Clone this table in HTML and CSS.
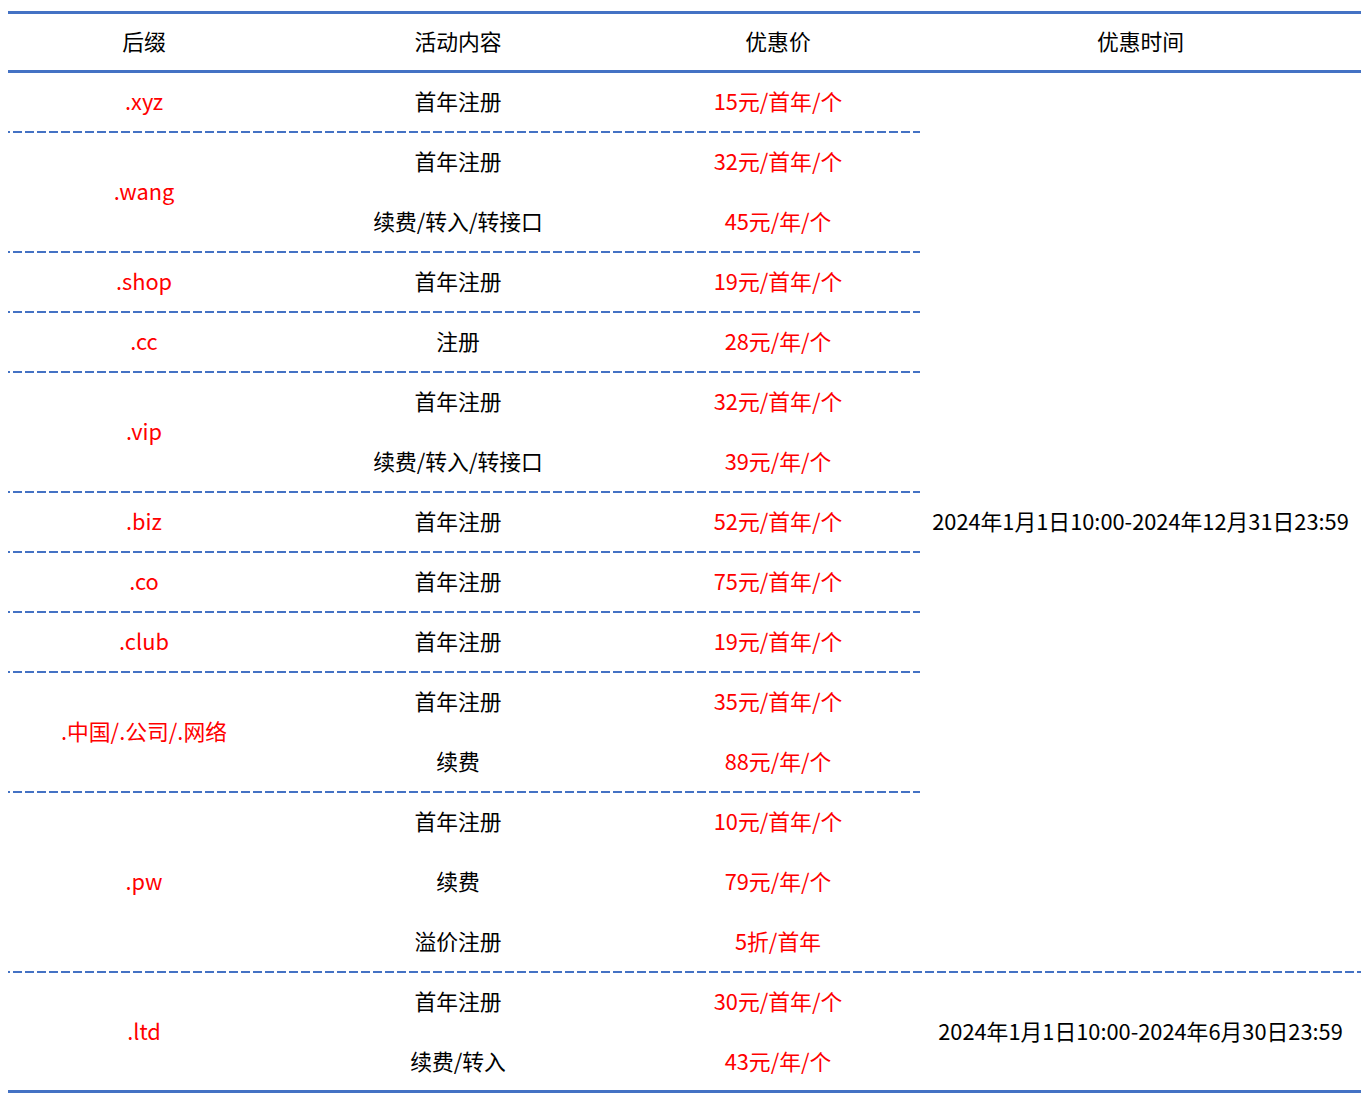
FILE: index.html
```html
<!DOCTYPE html>
<html lang="zh-CN">
<head>
<meta charset="utf-8">
<title>域名优惠活动</title>
<link rel="stylesheet" href="styles.css">
</head>
<body>
<div class="sheet">
  <div class="head">
    <div>后缀</div>
    <div>活动内容</div>
    <div>优惠价</div>
    <div>优惠时间</div>
  </div>

  <div class="section first">
    <div class="groups">
      <div class="group">
        <div class="suffix">.xyz</div>
        <div class="items">
          <div class="item"><span>首年注册</span><span class="price">15元/首年/个</span></div>
        </div>
      </div>
      <div class="group">
        <div class="suffix">.wang</div>
        <div class="items">
          <div class="item"><span>首年注册</span><span class="price">32元/首年/个</span></div>
          <div class="item"><span>续费/转入/转接口</span><span class="price">45元/年/个</span></div>
        </div>
      </div>
      <div class="group">
        <div class="suffix">.shop</div>
        <div class="items">
          <div class="item"><span>首年注册</span><span class="price">19元/首年/个</span></div>
        </div>
      </div>
      <div class="group">
        <div class="suffix">.cc</div>
        <div class="items">
          <div class="item"><span>注册</span><span class="price">28元/年/个</span></div>
        </div>
      </div>
      <div class="group">
        <div class="suffix">.vip</div>
        <div class="items">
          <div class="item"><span>首年注册</span><span class="price">32元/首年/个</span></div>
          <div class="item"><span>续费/转入/转接口</span><span class="price">39元/年/个</span></div>
        </div>
      </div>
      <div class="group">
        <div class="suffix">.biz</div>
        <div class="items">
          <div class="item"><span>首年注册</span><span class="price">52元/首年/个</span></div>
        </div>
      </div>
      <div class="group">
        <div class="suffix">.co</div>
        <div class="items">
          <div class="item"><span>首年注册</span><span class="price">75元/首年/个</span></div>
        </div>
      </div>
      <div class="group">
        <div class="suffix">.club</div>
        <div class="items">
          <div class="item"><span>首年注册</span><span class="price">19元/首年/个</span></div>
        </div>
      </div>
      <div class="group">
        <div class="suffix">.中国/.公司/.网络</div>
        <div class="items">
          <div class="item"><span>首年注册</span><span class="price">35元/首年/个</span></div>
          <div class="item"><span>续费</span><span class="price">88元/年/个</span></div>
        </div>
      </div>
      <div class="group">
        <div class="suffix">.pw</div>
        <div class="items">
          <div class="item"><span>首年注册</span><span class="price">10元/首年/个</span></div>
          <div class="item"><span>续费</span><span class="price">79元/年/个</span></div>
          <div class="item"><span>溢价注册</span><span class="price">5折/首年</span></div>
        </div>
      </div>
    </div>
    <div class="period">2024年1月1日10:00-2024年12月31日23:59</div>
  </div>

  <div class="section last">
    <div class="groups">
      <div class="group">
        <div class="suffix">.ltd</div>
        <div class="items">
          <div class="item"><span>首年注册</span><span class="price">30元/首年/个</span></div>
          <div class="item"><span>续费/转入</span><span class="price">43元/年/个</span></div>
        </div>
      </div>
    </div>
    <div class="period">2024年1月1日10:00-2024年6月30日23:59</div>
  </div>
</div>
</body>
</html>
```

FILE: styles.css
```css
html, body {
  margin: 0;
  padding: 0;
  background: #ffffff;
}

.sheet {
  width: 1353px;
  margin: 11px 8px 0;
  font-family: "Noto Sans CJK SC", "Noto Sans", sans-serif;
  font-size: 21.8px;
  color: #000000;
}

.head {
  display: grid;
  grid-template-columns: 272px 356px 284px 441px;
  height: 62px;
  box-sizing: border-box;
  padding-bottom: 4px;
  border-top: 3px solid #4472c4;
  border-bottom: 3px solid #4472c4;
  align-items: center;
  text-align: center;
}

.section {
  display: flex;
}

.section.first {
  background-image: repeating-linear-gradient(90deg, #4472c4 0 9px, transparent 9px 12px);
  background-size: 12px 2px;
  background-repeat: repeat-x;
  background-position: left -7px bottom 0;
}

.section.last {
  background-image: linear-gradient(#4472c4, #4472c4);
  background-size: 100% 3px;
  background-repeat: no-repeat;
  background-position: left bottom;
}

.groups {
  width: 912px;
  flex: none;
}

.group {
  display: flex;
  background-image: repeating-linear-gradient(90deg, #4472c4 0 9px, transparent 9px 12px);
  background-size: 12px 2px;
  background-repeat: repeat-x;
  background-position: left -7px bottom 0;
}

.section.first .group:last-child,
.section.last .group {
  background-image: none;
}

.suffix {
  width: 272px;
  flex: none;
  display: flex;
  align-items: center;
  justify-content: center;
  padding-bottom: 6px;
  box-sizing: border-box;
  color: #ff0000;
}

.items {
  width: 640px;
  flex: none;
}

.item {
  display: grid;
  grid-template-columns: 356px 284px;
  height: 60px;
  box-sizing: border-box;
  padding-bottom: 6px;
  align-items: center;
  text-align: center;
}

.price {
  color: #ff0000;
}

.period {
  flex: 1;
  display: flex;
  align-items: center;
  justify-content: center;
  padding-bottom: 6px;
}
```
